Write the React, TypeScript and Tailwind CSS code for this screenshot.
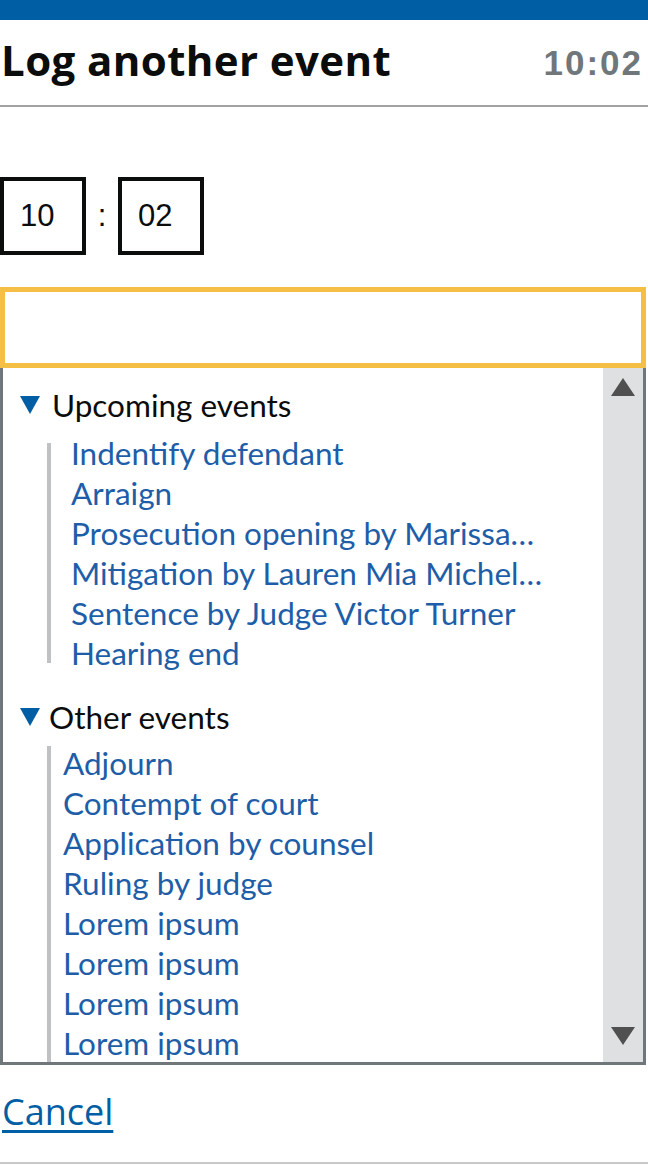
const upcoming = [
  'Indentify defendant',
  'Arraign',
  'Prosecution opening by Marissa…',
  'Mitigation by Lauren Mia Michel…',
  'Sentence by Judge Victor Turner',
  'Hearing end',
]

const other = [
  'Adjourn',
  'Contempt of court',
  'Application by counsel',
  'Ruling by judge',
  'Lorem ipsum',
  'Lorem ipsum',
  'Lorem ipsum',
  'Lorem ipsum',
]

const Caret = () => (
  <svg width="20" height="18" viewBox="0 0 20 18" className="shrink-0">
    <polygon points="0,0 20,0 10,18" fill="#005ea5" />
  </svg>
)

const Arrow = ({ down }: { down?: boolean }) => (
  <svg width="24" height="18" viewBox="0 0 24 18">
    <polygon points={down ? '0,0 24,0 12,18' : '12,0 24,18 0,18'} fill="#505050" />
  </svg>
)

const App = () => {
  return (
    <div className="w-[648px] bg-white text-[#0b0c0c] font-['Lato',sans-serif]">
      {/* top bar */}
      <div className="h-[20px] bg-[#005ea5]" />

      {/* header */}
      <div className="h-[87px] flex items-center justify-between pb-[6px] border-b-2 border-[#a1a1a1]">
        <h1 className="pl-[1px] text-[42px] font-bold leading-[48px] tracking-[0.4px] font-['Open_Sans',sans-serif]">
          Log another event
        </h1>
        <span className="mt-[6px] pr-[5px] text-[35px] font-bold leading-[40px] tracking-[2px] text-[#6f777b] font-['Liberation_Sans',Arial,sans-serif]">
          10:02
        </span>
      </div>

      {/* time inputs */}
      <div className="mt-[70px] flex items-center font-['Liberation_Sans',Arial,sans-serif] text-[31px]">
        <div className="w-[86px] h-[78px] border-4 border-[#0b0c0c] flex items-center pl-[16px]">10</div>
        <span className="w-[32px] text-center">:</span>
        <div className="w-[86px] h-[78px] border-4 border-[#0b0c0c] flex items-center pl-[16px]">02</div>
      </div>

      {/* search input */}
      <div className="mt-[32px] w-[646px] h-[81px] border-[5px] border-[#f5bf46]" />

      {/* event list */}
      <div className="w-[646px] h-[697px] flex border-x-[3px] border-b-[3px] border-[#6f777b]">
        <div className="flex-1 overflow-hidden pt-[17px] text-[31.5px]">
          <div className="flex items-center gap-[12px] pl-[17px] leading-[40px]">
            <Caret />
            <span>Upcoming events</span>
          </div>
          <div className="mt-[18px] ml-[44px] flex flex-col border-l-4 border-[#bfc1c3]">
            <ul className="-my-[10px] pl-[20px] leading-[40px] text-[#1e5ea8]">
              {upcoming.map((item, i) => (
                <li key={i} className="whitespace-nowrap">{item}</li>
              ))}
            </ul>
          </div>

          <div className="mt-[34px] flex items-center gap-[9px] pl-[17px] leading-[40px]">
            <Caret />
            <span>Other events</span>
          </div>
          <div className="mt-[9px] ml-[44px] flex flex-col border-l-4 border-[#bfc1c3]">
            <ul className="-mt-[3px] pl-[12px] leading-[40px] text-[#1e5ea8]">
              {other.map((item, i) => (
                <li key={i} className="whitespace-nowrap">{item}</li>
              ))}
            </ul>
          </div>
        </div>

        {/* scrollbar */}
        <div className="w-[40px] bg-[#dee0e2] flex flex-col items-center justify-between pt-[10px] pb-[17px]">
          <Arrow />
          <Arrow down />
        </div>
      </div>

      {/* cancel */}
      <div className="mt-[27px] pl-[2px] leading-[40px] text-[36px] font-['Open_Sans',sans-serif]">
        <a href="#" className="text-[#005ea5] underline decoration-[3px] underline-offset-[5px]">
          Cancel
        </a>
      </div>

      <div className="mt-[30px] border-t-2 border-[#c8c8c8]" />
    </div>
  )
}

export default App
